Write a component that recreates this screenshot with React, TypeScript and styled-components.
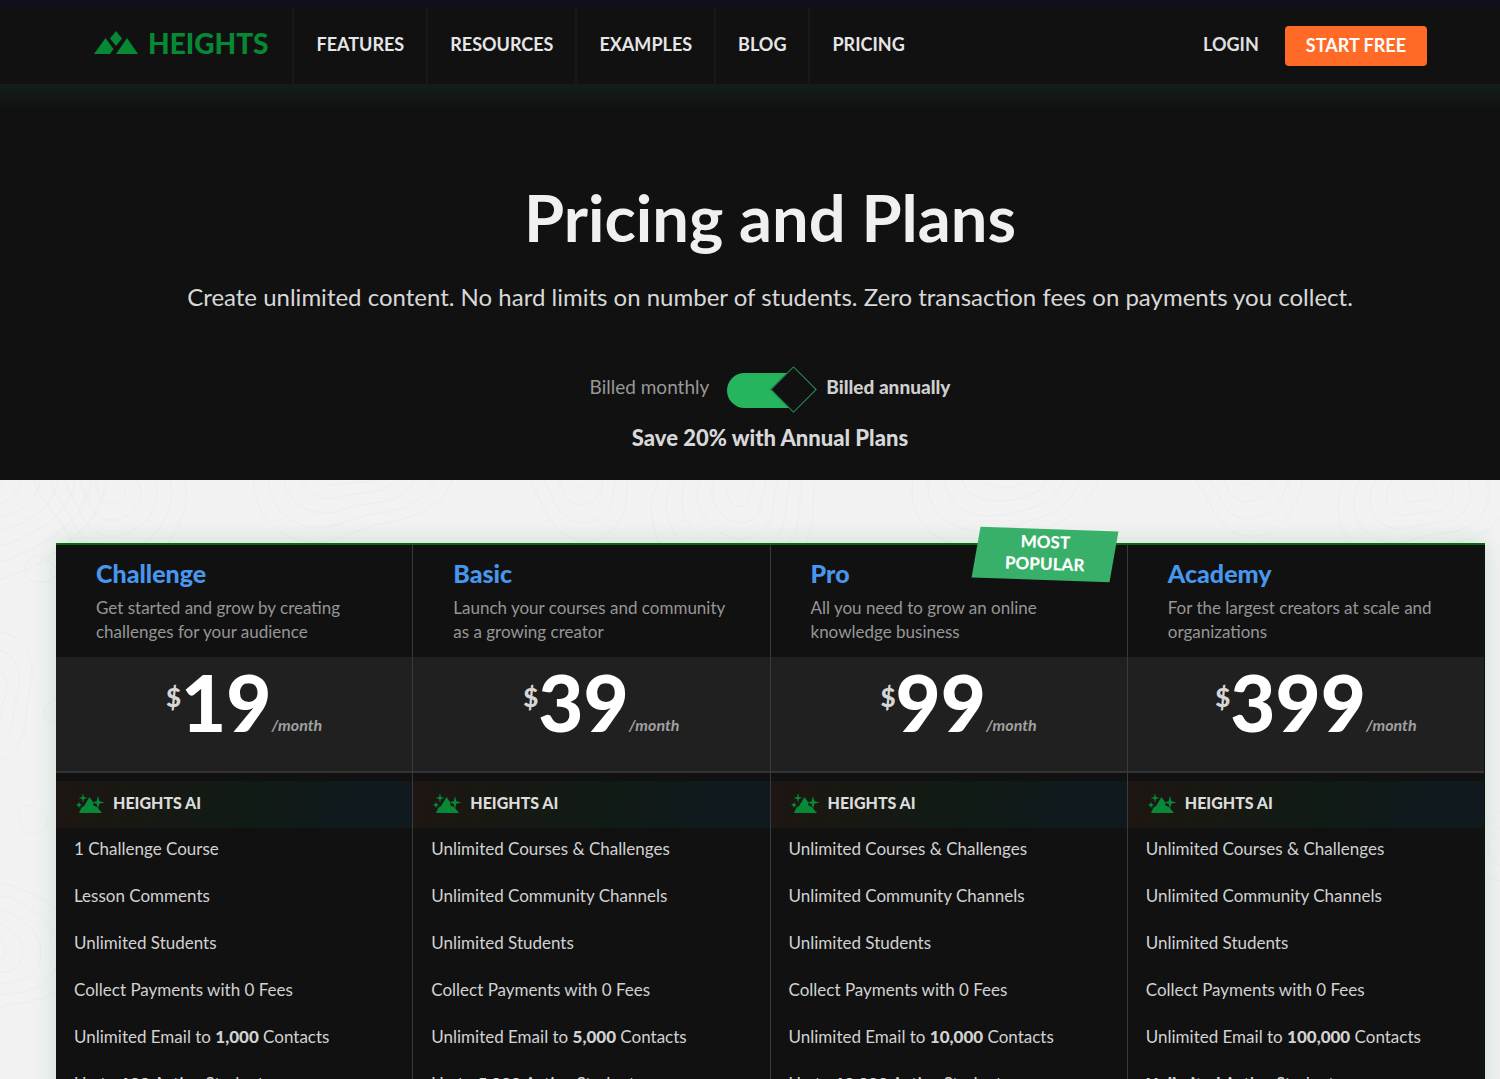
import React, { useState } from "react";
import styled, { createGlobalStyle } from "styled-components";

const Global = createGlobalStyle`
  *, *::before, *::after { box-sizing: border-box; }
  html, body { margin: 0; background: #111; }
  body { font-family: Lato, "Open Sans", sans-serif; color: #d6d6d6; }
  h1, h2, p, ul { margin: 0; padding: 0; font: inherit; }
  ul { list-style: none; }
  a { color: inherit; text-decoration: none; }
`;

const Page = styled.div`
  height: 100vh;
  overflow-y: auto;
  scrollbar-width: none;
`;

const Header = styled.header`
  display: flex;
  align-items: stretch;
  height: 84px;
  padding: 0 73px 0 94px;
  border-top: 8px solid #120f1b;
  background: #111;
`;

const Logo = styled.a`
  display: flex;
  align-items: center;
  gap: 10px;
  padding: 0 24px 6px 0;
  color: #078835;
  font-size: 28px;
  font-weight: 900;
  line-height: 32px;
`;

const LogoMark = styled.svg`
  display: block;
  width: 44px;
  height: 24px;
  fill: currentColor;
`;

const Nav = styled.nav`
  display: flex;
  flex: 1;
`;

const NavLink = styled.a`
  display: flex;
  align-items: center;
  padding: 0 22px 4px;
  border-left: 2px solid #181818;
  color: #e6e6e6;
  font-size: 18px;
  font-weight: 700;
  line-height: 24px;
`;

const Actions = styled.div`
  display: flex;
  align-items: center;
  gap: 26px;
`;

const Login = styled.a`
  padding-bottom: 4px;
  color: #e0e0e0;
  font-size: 18px;
  font-weight: 700;
  line-height: 24px;
`;

const StartButton = styled.button`
  height: 40px;
  padding: 0 21px 2px;
  border: 0;
  border-radius: 4px;
  background: #ff6b26;
  color: #fff;
  font: 700 18px/24px Lato, sans-serif;
`;

const Hero = styled.section`
  display: flex;
  flex-direction: column;
  align-items: center;
  height: 396px;
  padding: 94px 0 0 40px;
  background: linear-gradient(#141e1b, #111 24px);
  text-align: center;
`;

const Title = styled.h1`
  color: #f0f0f0;
  font-size: 65px;
  font-weight: 700;
  line-height: 78px;
`;

const Lead = styled.p`
  margin-top: 25px;
  color: #d8d8d8;
  font-size: 24px;
  line-height: 32px;
`;

const Billing = styled.div`
  display: flex;
  align-items: center;
  gap: 18px;
  height: 48px;
  margin-top: 53px;
  font-size: 19px;
  line-height: 24px;
`;

const BillingOption = styled.label<{ $on: boolean }>`
  padding-bottom: 6px;
  color: ${(p) => (p.$on ? "#cfcfcf" : "#989898")};
  font-weight: ${(p) => (p.$on ? 900 : 400)};
`;

const Switch = styled.input`
  appearance: none;
  position: relative;
  width: 81px;
  height: 35px;
  margin: 0;
  border-radius: 18px;
  background: linear-gradient(to right, #27b45f 66px, transparent 66px);

  &::after {
    content: "";
    position: absolute;
    top: 0;
    left: 50px;
    width: 33px;
    height: 33px;
    border: 1px solid #23965a;
    background: #111;
    transform: rotate(45deg);
  }
  &:not(:checked)::after { left: 0; }
`;

const Saving = styled.p`
  margin-top: 10px;
  color: #d8d8d8;
  font-size: 22px;
  font-weight: 900;
  line-height: 28px;
`;

const Plans = styled.section`
  position: relative;
  padding: 63px 15px 63px 56px;
  background: #f2f2f2;
`;

const Contours = styled.svg`
  position: absolute;
  inset: 0;
  width: 100%;
  height: 100%;
  fill: none;
  stroke: #ececec;
`;

const Grid = styled.div`
  position: relative;
  display: grid;
  grid-template-columns: repeat(4, 1fr);
  border-top: 2px solid #07680f;
  background: #111;
  box-shadow: 0 0 22px rgba(40, 150, 80, 0.2);
`;

const Plan = styled.article`
  position: relative;
  border-right: 1px solid #3a3a3a;
  &:last-child { border-right-color: #111; }
`;

const PlanHead = styled.div`
  height: 112px;
  padding: 12px 36px 0 40px;
`;

const PlanName = styled.h2`
  color: #4797ee;
  font-size: 25px;
  font-weight: 900;
  line-height: 32px;
`;

const PlanText = styled.p`
  margin-top: 7px;
  color: #969696;
  font-size: 17px;
  line-height: 24px;
`;

const Badge = styled.span`
  position: absolute;
  z-index: 0;
  top: -16px;
  right: 13px;
  width: 138px;
  height: 51px;
  padding-top: 2px;
  color: #fff;
  font-size: 17px;
  font-weight: 900;
  line-height: 22px;
  text-align: center;
  transform: rotate(2deg);

  &::before {
    content: "";
    position: absolute;
    z-index: -1;
    inset: 0;
    background: #38b069;
    transform: skewX(-8deg);
  }
`;

const Price = styled.div`
  display: flex;
  justify-content: center;
  height: 116px;
  padding: 8px 0 0 20px;
  border-bottom: 2px solid #333;
  background: #202020;
`;

const Currency = styled.span`
  padding-top: 16px;
  color: #d6d6d6;
  font-size: 26px;
  font-weight: 900;
  line-height: 32px;
`;

const Amount = styled.span`
  color: #fff;
  font-size: 78px;
  font-weight: 900;
  line-height: 74px;
`;

const Period = styled.span`
  padding-top: 48px;
  color: #a0a0a0;
  font-size: 16px;
  font-style: italic;
  font-weight: 700;
  line-height: 24px;
`;

const AiRow = styled.div`
  display: flex;
  align-items: center;
  gap: 8px;
  height: 47px;
  margin-top: 8px;
  padding: 0 19px 4px;
  background: linear-gradient(100deg, #1e1612, #111b14 50%, #10191d 82%);
  color: #dcdcdc;
  font-size: 16px;
  font-weight: 900;
  line-height: 24px;
`;

const AiMark = styled.svg`
  width: 30px;
  height: 24px;
  fill: #078a38;
`;

const Feature = styled.li`
  padding: 9px 18px 14px;
  color: #d2d2d2;
  font-size: 17px;
  line-height: 24px;

  b { font-weight: 900; }
`;

const ring = (cx: number, cy: number, r: number, seed: number) => {
  let d = "";
  for (let i = 0; i <= 60; i++) {
    const a = (i / 60) * Math.PI * 2;
    const k = r * (1 + 0.14 * Math.sin(a * 2 + seed) + 0.08 * Math.cos(a * 3 - seed + r / 60));
    d += `${i ? "L" : "M"}${Math.round(cx + k * Math.cos(a))} ${Math.round(cy + k * Math.sin(a))}`;
  }
  return d + "Z";
};

const hills = [
  [-30, -10, 8, 1], [110, 10, 5, 0], [350, -20, 6, 2], [580, -10, 4, 5], [740, 10, 6, 4],
  [1010, -20, 6, 3], [1245, -10, 4, 6], [1420, 10, 5, 2],
  [40, 90, 1, 1], [-20, 220, 4, 4], [32, 340, 1, 0], [60, 230, 1, 2], [-10, 470, 5, 2], [1520, 360, 3, 3],
];

const contourPaths = hills.flatMap(([x, y, n, seed]) =>
  Array.from({ length: n }, (_, i) => ring(x, y, 14 + i * 15, seed)),
);

type PlanData = {
  name: string;
  text: string;
  price: string;
  popular?: boolean;
  items: string[];
  contacts: string;
  students: React.ReactNode;
};

const common = ["Unlimited Courses & Challenges", "Unlimited Community Channels", "Unlimited Students", "Collect Payments with 0 Fees"];

const plans: PlanData[] = [
  {
    name: "Challenge",
    text: "Get started and grow by creating challenges for your audience",
    price: "19",
    items: ["1 Challenge Course", "Lesson Comments", "Unlimited Students", "Collect Payments with 0 Fees"],
    contacts: "1,000",
    students: <>Up to <b>100</b> Active Students</>,
  },
  {
    name: "Basic",
    text: "Launch your courses and community as a growing creator",
    price: "39",
    items: common,
    contacts: "5,000",
    students: <>Up to <b>5,000</b> Active Students</>,
  },
  {
    name: "Pro",
    text: "All you need to grow an online knowledge business",
    price: "99",
    popular: true,
    items: common,
    contacts: "10,000",
    students: <>Up to <b>10,000</b> Active Students</>,
  },
  {
    name: "Academy",
    text: "For the largest creators at scale and organizations",
    price: "399",
    items: common,
    contacts: "100,000",
    students: <><b>Unlimited</b> Active Students</>,
  },
];

const links = ["FEATURES", "RESOURCES", "EXAMPLES", "BLOG", "PRICING"];

export default function App() {
  const [annual, setAnnual] = useState(true);
  return (
    <Page>
      <Global />
      <Header>
        <Logo href="#">
          <LogoMark viewBox="0 0 44 24" aria-hidden="true">
            <path d="M22 0l6 7.500-6 7.500-6-7.500z" />
            <path d="M0 23L11.500 7l8 11-3.500 5z" />
            <path d="M22 23L33 7l11 16z" />
          </LogoMark>
          HEIGHTS
        </Logo>
        <Nav>
          {links.map((l) => (
            <NavLink key={l} href="#">{l}</NavLink>
          ))}
        </Nav>
        <Actions>
          <Login href="#">LOGIN</Login>
          <StartButton>START FREE</StartButton>
        </Actions>
      </Header>
      <Hero>
        <Title>Pricing and Plans</Title>
        <Lead>Create unlimited content. No hard limits on number of students. Zero transaction fees on payments you collect.</Lead>
        <Billing>
          <BillingOption htmlFor="billing" $on={!annual}>Billed monthly</BillingOption>
          <Switch id="billing" type="checkbox" role="switch" checked={annual} onChange={(e) => setAnnual(e.target.checked)} />
          <BillingOption htmlFor="billing" $on={annual}>Billed annually</BillingOption>
        </Billing>
        <Saving>Save 20% with Annual Plans</Saving>
      </Hero>
      <Plans>
        <Contours aria-hidden="true">
          {contourPaths.map((d, i) => (
            <path key={i} d={d} />
          ))}
        </Contours>
        <Grid>
          {plans.map((p) => (
            <Plan key={p.name}>
              {p.popular && <Badge>MOST<br />POPULAR</Badge>}
              <PlanHead>
                <PlanName>{p.name}</PlanName>
                <PlanText>{p.text}</PlanText>
              </PlanHead>
              <Price>
                <Currency>$</Currency>
                <Amount>{p.price}</Amount>
                <Period>/month</Period>
              </Price>
              <AiRow>
                <AiMark viewBox="0 0 30 24" aria-hidden="true">
                  <path d="M4 22l2.500-5.500L9 15l5.500-9 3.500 5 .5 3.500 3.500 1.500L27 22z" />
                  <path d="M8 2l.9 4.100L12.500 7l-3.600.9L8 12l-.9-4.100L3.500 7l3.600-.9z" />
                  <path d="M23 5l1.300 5.200 5.200 1.300-5.200 1.300L23 18l-1.300-5.200-4.700-1.300 4.700-1.300z" />
                  <path d="M4 11l.9 2.100L7 14l-2.100.9L4 17l-.9-2.100L1 14l2.100-.9z" />
                </AiMark>
                HEIGHTS AI
              </AiRow>
              <ul>
                {p.items.map((t) => (
                  <Feature key={t}>{t}</Feature>
                ))}
                <Feature>Unlimited Email to <b>{p.contacts}</b> Contacts</Feature>
                <Feature>{p.students}</Feature>
              </ul>
            </Plan>
          ))}
        </Grid>
      </Plans>
    </Page>
  );
}
